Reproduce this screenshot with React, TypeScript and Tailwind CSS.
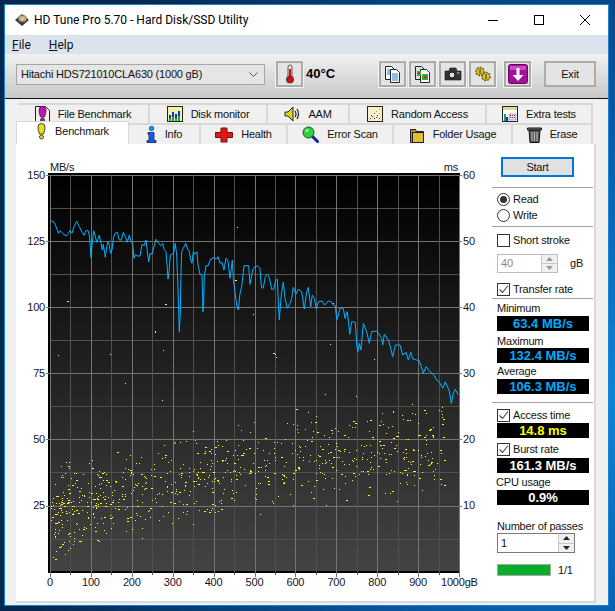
import React from 'react';

// trace of the transfer curve, read off the reference (page px)
const part1 = [[92,198],[100,199],[105,207],[112,225],[116,235],[120,227],[128,235],[138,243],[145,235],[150,227],[156,235],[162,215],[170,199],[178,215],[186,232],[192,241],[197,228],[204,226],[208,240],[210,265],[213,308],[216,270],[219,245],[221,227],[225,240],[230,262],[235,250],[238,240],[243,265],[247,285],[250,268],[254,295],[256,307],[260,275],[264,260],[268,270],[272,295],[276,285],[280,250],[285,235],[292,232],[298,255],[304,255],[310,232],[316,245],[322,262],[328,240],[334,262],[338,268],[342,310],[346,298],[352,303],[360,303],[366,268],[372,272],[378,255],[382,290],[386,320],[390,295],[396,298],[402,275],[408,253],[416,265],[422,272],[428,265],[432,283],[438,290],[442,340],[444,372],[447,350],[451,300],[455,297],[460,298],[466,265],[470,300],[473,375],[476,475],[478,530],[481,475],[483,350],[485,290],[490,280],[497,265],[503,282],[508,290],[512,315],[516,325],[520,290],[525,298],[531,290],[534,330],[540,358],[546,360],[549,470],[551,440],[553,365],[558,332],[564,332],[572,312],[580,308],[590,312],[594,305],[600,325],[606,322],[612,345],[618,310],[624,318],[630,370],[637,316],[640,370],[644,405],[650,450],[655,465],[660,415],[665,395],[672,332],[686,332],[690,388],[698,345],[704,335],[712,332]];
const part2 = [[30,340],[33,385],[36,400],[40,398],[46,365],[52,358],[58,368],[65,403],[71,403],[77,375],[82,373],[85,440],[88,495],[92,440],[95,410],[100,382],[105,430],[112,460],[120,445],[125,430],[130,397],[138,417],[145,403],[155,410],[163,462],[170,410],[175,397],[182,455],[187,420],[193,430],[199,462],[205,440],[217,438],[224,450],[235,438],[243,440],[250,450],[256,452],[260,495],[265,480],[270,460],[280,460],[285,490],[292,470],[297,515],[299,538],[305,500],[316,502],[320,570],[323,592],[328,565],[333,585],[340,505],[350,530],[358,565],[365,530],[380,528],[395,550],[398,570],[403,538],[415,555],[422,580],[428,605],[436,570],[450,570],[458,600],[468,592],[475,615],[482,592],[488,612],[508,617],[520,655],[528,635],[540,650],[550,658],[558,672],[570,685],[578,700],[586,680],[598,708],[604,745],[610,715],[616,703],[625,720]];
const curve = [
  ...part1.map(([x, y]) => [20 + x / 3, 155 + y / 3]),
  ...part2.map(([x, y]) => [250 + x / 3, 155 + y / 3]),
].map(([x, y]) => `${x.toFixed(1)},${y.toFixed(1)}`).join(' ');

const outliers = [[67,301],[58,355],[125,383],[155,332],[275,354],[165,455],[193,431],[163,350],[162,400],[20+142/3,155+439/3],[20+436/3,155+448/3],[20+406/3,155+529/3],[20+430/3,155+586/3],[20+271/3,155+598/3],[20+652/3,155+217/3],[20+646/3,155+376/3],[20+700/3,155+478/3],[250+10/3,155+478/3],[250+250/3,155+443/3],[250+241/3,155+568/3],[250+70/3,155+595/3],[250+79/3,155+607/3],[250+373/3,155+613/3],[250+226/3,155+718/3],[250+319/3,155+724/3],[250+139/3,155+763/3],[250+487/3,155+748/3],[250+577/3,155+757/3],[250+574/3,155+769/3]];

let seed = 20240611;
const rnd = () => {
  seed = (seed + 0x6d2b79f5) | 0;
  let t = Math.imul(seed ^ (seed >>> 15), 1 | seed);
  t = (t + Math.imul(t ^ (t >>> 7), 61 | t)) ^ t;
  return ((t ^ (t >>> 14)) >>> 0) / 4294967296;
};
const dots: number[][] = [...outliers];
for (let i = 0; i < 780; i++) {
  const x = 51 + 395 * Math.pow(rnd(), 1.3);
  const slope = x < 300 ? (x - 50) * 0.2 : 50 + (x - 300) * 0.06;
  const mid = 510 - slope + (x < 60 ? 14 : 0);
  const y = mid + (rnd() + rnd() - 1) * 50;
  dots.push([Math.round(x), Math.round(y)]);
}

const hLines = Array.from({ length: 12 }, (_, i) => 175 + i * 33.05);
const vLines = Array.from({ length: 21 }, (_, i) => 50 + i * 20.45);
const leftLabels = [['150', 175], ['125', 241], ['100', 307], ['75', 373], ['50', 439], ['25', 505]];
const rightLabels = [['60', 175], ['50', 241], ['40', 307], ['30', 373], ['20', 439], ['10', 505]];
const xLabels = [0, 100, 200, 300, 400, 500, 600, 700, 800, 900];

const Chart = () => (
  <svg viewBox="16 144 474 457" className="w-[474px] h-[457px] shrink-0">
    <defs>
      <linearGradient id="plot" x1="0" y1="0" x2="0" y2="1">
        <stop offset="0" stopColor="#000000" />
        <stop offset="1" stopColor="#434343" />
      </linearGradient>
    </defs>
    <rect x="48" y="173" width="412" height="400" fill="#000" />
    <rect x="50" y="175" width="409" height="396" fill="url(#plot)" />
    <g shapeRendering="crispEdges" strokeWidth="1">
      {hLines.map((y, i) => (
        <line key={y} x1={i % 2 ? 50 : 46} x2={i % 2 ? 459 : 462} y1={Math.round(y) + 0.5} y2={Math.round(y) + 0.5} stroke={i % 2 ? '#505050' : '#757575'} />
      ))}
      {vLines.map((x, i) => (
        <line key={x} x1={Math.round(x) + 0.5} x2={Math.round(x) + 0.5} y1="175" y2={i % 2 ? 575 : 577} stroke={i % 2 ? '#505050' : '#757575'} />
      ))}
    </g>
    <g fill="#ffff00" shapeRendering="crispEdges">
      {dots.map(([x, y], i) => <rect key={i} x={Math.round(x)} y={Math.round(y)} width={i % 5 === 0 ? 2 : 1} height="1" />)}
    </g>
    <polyline points={curve} fill="none" stroke="#00b4ff" strokeWidth="1" strokeLinejoin="round" />
    <g fontFamily="'Liberation Sans', Arial, sans-serif" fontSize="11" fill="#15151f">
      <text x="50" y="171">MB/s</text>
      <text x="458" y="171" textAnchor="end">ms</text>
      {leftLabels.map(([t, y]) => <text key={t} x="45" y={Number(y) + 4} textAnchor="end">{t}</text>)}
      {rightLabels.map(([t, y]) => <text key={t} x="463" y={Number(y) + 4}>{t}</text>)}
      {xLabels.map((t, i) => <text key={t} x={50 + i * 40.9} y="586" textAnchor="middle">{t}</text>)}
      <text x="441" y="586">1000gB</text>
    </g>
  </svg>
);

// toolbar + tab icons
const DiskIcon = () => (
  <svg viewBox="0 0 16 14" className="w-4 h-[14px]">
    <path d="M1 7 8 1l7 6-7 6z" fill="#3a3a3a" />
    <ellipse cx="8.5" cy="5.6" rx="4.2" ry="3.4" fill="#c8a878" stroke="#6b5a3a" strokeWidth=".5" />
    <circle cx="8.5" cy="5.6" r="1.1" fill="#f2e6cc" />
  </svg>
);
const Thermometer = () => (
  <svg viewBox="0 0 14 20" className="w-[14px] h-5">
    <rect x="5" y="1" width="4" height="13" rx="2" fill="#e8e8e8" stroke="#333" strokeWidth=".8" />
    <rect x="6" y="5" width="2" height="9" fill="#d01010" />
    <circle cx="7" cy="15.5" r="3.6" fill="#d01010" stroke="#333" strokeWidth=".8" />
  </svg>
);
const Doc = ({ x, y, fill }: { x: number; y: number; fill: string }) => (
  <path d={`M${x} ${y}h6l3 3v10h-9z`} fill={fill} stroke="#222" strokeWidth="1" />
);
const CopyText = () => (
  <svg viewBox="0 0 17 17" className="w-[17px] h-[17px]">
    <Doc x={1.5} y={.5} fill="#fff" />
    <Doc x={6.5} y={3.5} fill="#fff" />
    <path d="M8 8h6M8 10h6M8 12h6M8 14h6" stroke="#1e7be0" strokeWidth="1" />
    <path d="M3 4h3M3 6h3M3 8h3" stroke="#1e7be0" strokeWidth="1" />
  </svg>
);
const CopyImage = () => (
  <svg viewBox="0 0 17 17" className="w-[17px] h-[17px]">
    <Doc x={1.5} y={.5} fill="#ddd" />
    <Doc x={6.5} y={3.5} fill="#fff" />
    <rect x="3" y="5" width="4" height="5" fill="#1fb53a" />
    <rect x="4" y="6" width="2" height="2" fill="#e02020" />
    <rect x="8" y="8" width="6" height="6" fill="#1fb53a" />
    <rect x="10" y="10" width="2.5" height="2.5" fill="#e02020" />
  </svg>
);
const Camera = () => (
  <svg viewBox="0 0 18 14" className="w-[18px] h-[14px]">
    <path d="M1 4h4l1-3h6l1 3h4v9H1z" fill="#333" stroke="#111" strokeWidth=".6" />
    <circle cx="8" cy="8" r="3" fill="#ddd" stroke="#111" />
    <rect x="13" y="5" width="2.5" height="2" fill="#19c24a" />
  </svg>
);
const Gears = () => (
  <svg viewBox="0 0 18 16" className="w-[18px] h-4">
    <circle cx="6" cy="5.5" r="4" fill="#d8c820" stroke="#6a5f10" strokeWidth="1.6" strokeDasharray="2 1" />
    <circle cx="12" cy="10.5" r="4" fill="#d8c820" stroke="#6a5f10" strokeWidth="1.6" strokeDasharray="2 1" />
    <path d="M6 3v5M12 8v5" stroke="#444" strokeWidth="1.2" />
  </svg>
);
const SaveArrow = () => (
  <svg viewBox="0 0 20 20" className="w-5 h-5">
    <rect x=".5" y=".5" width="19" height="19" rx="2" fill="#a3109a" stroke="#5c0a58" />
    <rect x="2" y="2" width="16" height="4" fill="#c84cc0" />
    <path d="M8.500 4h3v7h4L10 17l-5.500-6h4z" fill="#fff" />
  </svg>
);
const Exclaim = ({ color, dark }: { color: string; dark: string }) => (
  <g>
    <path d="M2 4a3.500 3.500 0 0 1 7 0q0 3-1.500 7h-4Q2 7 2 4z" fill={color} stroke={dark} strokeWidth=".9" />
    <circle cx="5.500" cy="14" r="2" fill={color} stroke={dark} strokeWidth=".9" />
  </g>
);
const BenchIcon = () => (
  <svg viewBox="0 0 11 17" className="w-[11px] h-[17px]"><Exclaim color="#e8e010" dark="#333" /></svg>
);
const FileBenchIcon = () => (
  <svg viewBox="0 0 15 17" className="w-[15px] h-[17px]">
    <path d="M.5.5h10l4 4v12H.5z" fill="#f4f0e4" stroke="#222" />
    <g transform="translate(2 0)"><Exclaim color="#c010c0" dark="#333" /></g>
  </svg>
);
const MonitorIcon = () => (
  <svg viewBox="0 0 16 16" className="w-4 h-4">
    <rect x=".5" y=".5" width="15" height="15" fill="#f4f0a8" stroke="#222" />
    <path d="M2 15V9h2v6zM5 15V6h2v9zM8 15V8h2v7zM11 15V5h2v10z" fill="#1030d0" />
    <path d="M2 15v-3h2v3zM5 15v-4h2v4zM8 15v-3h2v3zM11 15v-5h2v5z" fill="#18b030" />
  </svg>
);
const SpeakerIcon = () => (
  <svg viewBox="0 0 16 16" className="w-4 h-4">
    <path d="M1 6h3l5-5v14l-5-5H1z" fill="#e8d020" stroke="#222" />
    <path d="M11 5q2 3 0 6M13 3q3 5 0 10" fill="none" stroke="#222" strokeWidth="1.200" />
  </svg>
);
const RandomIcon = () => (
  <svg viewBox="0 0 16 16" className="w-4 h-4">
    <rect x=".5" y=".5" width="15" height="15" fill="#f6f2c8" stroke="#222" />
    <path d="M3 12h1v1H3zM5 10h1v1H5zM9 11h1v1H9zM12 12h1v1h-1z" fill="#e02020" />
    <path d="M4 9h1v1H4zM7 7h1v1H7zM10 9h1v1h-1zM7 12h1v1H7z" fill="#2040e0" />
    <path d="M9 5h1v1H9zM12 3h1v1h-1zM12 7h1v1h-1z" fill="#c8a010" />
  </svg>
);
const ExtraIcon = () => (
  <svg viewBox="0 0 16 16" className="w-4 h-4">
    <rect x=".5" y=".5" width="15" height="15" fill="#fff" stroke="#222" />
    <rect x="1" y="1" width="14" height="3" fill="#e0d890" />
    <path d="M2 15V8h2v7z" fill="#10b030" /><path d="M4 15v-4h2v4z" fill="#1030d0" />
    <path d="M7 8h7v6H7z" fill="#dfe6f6" stroke="#5060c0" strokeWidth=".5" />
    <path d="M8 9h1v1H8zM10 9h1v1h-1zM12 9h1v1h-1zM8 11h1v1H8zM10 11h1v1h-1zM12 11h1v1h-1z" fill="#c02020" />
  </svg>
);
const InfoIcon = () => (
  <svg viewBox="0 0 11 17" className="w-[11px] h-[17px]">
    <circle cx="5.500" cy="2.500" r="2.200" fill="#18a0f0" stroke="#102060" strokeWidth=".7" />
    <path d="M2 6.500h6v8h2v2H1v-2h2v-6H2z" fill="#1060e0" stroke="#102060" strokeWidth=".8" />
  </svg>
);
const HealthIcon = () => (
  <svg viewBox="0 0 18 16" className="w-[18px] h-4">
    <path d="M6 1h6v4.500h5.500v5H12V15H6v-4.500H.5v-5H6z" fill="#e01818" stroke="#701010" />
  </svg>
);
const ScanIcon = () => (
  <svg viewBox="0 0 17 17" className="w-[17px] h-[17px]">
    <path d="M10 10l5.500 5.500" stroke="#1020a0" strokeWidth="3" strokeLinecap="round" />
    <circle cx="6.500" cy="6.500" r="5.500" fill="#30d040" stroke="#185020" />
    <circle cx="5" cy="4.500" r="1.500" fill="#b0f0b0" />
  </svg>
);
const FolderIcon = () => (
  <svg viewBox="0 0 16 16" className="w-4 h-4">
    <path d="M1.500 2.500h5l1 2h7v11h-13z" fill="#b09010" stroke="#222" />
    <rect x="3.500" y="5.500" width="11" height="10" fill="#e0c030" stroke="#222" />
  </svg>
);
const TrashIcon = () => (
  <svg viewBox="0 0 15 17" className="w-[15px] h-[17px]">
    <path d="M2 4h11l-1 12.500H3z" fill="#5a5a5a" stroke="#111" />
    <path d="M5 6v9M7.500 6v9M10 6v9" stroke="#bbb" />
    <path d="M.5 2h14v2H.5z" fill="#777" stroke="#111" />
  </svg>
);
const Check = () => (
  <svg viewBox="0 0 11 11" className="w-[11px] h-[11px]">
    <path d="M1.500 5.500l3 3 5.500-7" fill="none" stroke="#444" strokeWidth="1.100" />
  </svg>
);
const ArrowPair = ({ dark }: { dark?: boolean }) => (
  <span className="flex flex-col w-4 h-full border-l border-[#c8c8c8] bg-[#f0f0f0]">
    <span className="flex-1 flex items-center justify-center border-b border-[#c8c8c8]">
      <svg viewBox="0 0 7 4" className="w-[7px] h-1"><path d="M3.500 0 7 4H0z" fill={dark ? '#222' : '#999'} /></svg>
    </span>
    <span className="flex-1 flex items-center justify-center">
      <svg viewBox="0 0 7 4" className="w-[7px] h-1"><path d="M0 0h7L3.500 4z" fill={dark ? '#222' : '#999'} /></svg>
    </span>
  </span>
);

const ToolBtn = ({ children, className }: { children: React.ReactNode; className?: string }) => (
  <div className={`w-[27px] h-[26px] flex items-center justify-center border-2 border-[#ababab] bg-[#e4e4e4] outline outline-1 outline-[#f4f4f4] ${className ?? ''}`}>
    {children}
  </div>
);

const Tab = ({ icon, label, className, active }: { icon: React.ReactNode; label: string; className: string; active?: boolean }) => (
  <div className={`flex items-center justify-center gap-2 border-[#d8d8d8] ${active ? 'bg-white border-t border-x' : 'bg-[#f0f0f0] border-t-2 border-r-2'} ${className}`}>
    {icon}
    <span>{label}</span>
  </div>
);

const Sep = ({ className }: { className: string }) => <div className={`h-px w-[101px] ml-[2px] bg-[#a0a0a0] ${className}`} />;

const CheckRow = ({ label, on, className }: { label: string; on?: boolean; className: string }) => (
  <div className={`flex items-center gap-[3px] h-4 ml-[7px] ${className}`}>
    <span className="w-[13px] h-[13px] border border-[#333] bg-white flex items-center justify-center">{on && <Check />}</span>
    <span>{label}</span>
  </div>
);

const Radio = ({ label, on }: { label: string; on?: boolean }) => (
  <div className="flex items-center gap-[3px] h-4 ml-[7px]">
    <span className="w-[13px] h-[13px] rounded-full border border-[#333] bg-white flex items-center justify-center">
      {on && <span className="w-[7px] h-[7px] rounded-full bg-[#333]" />}
    </span>
    <span>{label}</span>
  </div>
);

const Value = ({ text, className }: { text: string; className: string }) => (
  <div className={`w-[92px] ml-[7px] h-[15px] bg-black flex items-center justify-center text-[13px] tracking-normal font-bold leading-none ${className}`}>{text}</div>
);

export default function App() {
  return (
    <div className="w-[615px] h-[611px] overflow-hidden pl-1 pt-1 bg-[radial-gradient(circle_at_100%_65%,#0b84dc_0,#0a5fae_32%,#06284f_85%)] font-['Liberation_Sans',Arial,sans-serif] text-[11px] tracking-[-0.2px] text-[#111]">
      <div className="w-[605px] h-[602px] border border-[#1683d8] bg-[#f0f0f0] flex flex-col">
        {/* title bar */}
        <div className="h-[30px] shrink-0 bg-white flex items-center pl-[9px]">
          <DiskIcon />
          <span className="ml-[4px] font-['Roboto',sans-serif] text-xs tracking-normal text-black">HD Tune Pro 5.70 - Hard Disk/SSD Utility</span>
          <div className="ml-auto flex h-full">
            <div className="w-[46px] flex items-center justify-center"><span className="w-[10px] h-px bg-black" /></div>
            <div className="w-[46px] flex items-center justify-center"><span className="w-[10px] h-[10px] border border-black" /></div>
            <div className="w-[46px] flex items-center justify-center">
              <svg viewBox="0 0 10 10" className="w-[10px] h-[10px]"><path d="M0 0l10 10M10 0 0 10" stroke="#000" /></svg>
            </div>
          </div>
        </div>
        {/* menu */}
        <div className="h-[19px] shrink-0 bg-[#dce3ec] flex items-center pl-[7px] gap-[18px] font-['Roboto',sans-serif] text-xs tracking-normal">
          <span><u>F</u>ile</span>
          <span><u>H</u>elp</span>
        </div>
        {/* toolbar */}
        <div className="h-[45px] shrink-0 bg-gradient-to-b from-[#f1f1f1] to-[#c8c8c8] border-b border-[#111] flex items-center pl-[11px] pb-1">
          <div className="w-[249px] h-[21px] border border-[#a6a6a6] bg-[#e5e5e5] flex items-center pl-1 pr-[6px] justify-between">
            <span>Hitachi HDS721010CLA630 (1000 gB)</span>
            <svg viewBox="0 0 9 5" className="w-[9px] h-[5px]"><path d="M.5.5 4.500 4.500 8.500.5" fill="none" stroke="#555" /></svg>
          </div>
          <ToolBtn className="ml-[11px]"><Thermometer /></ToolBtn>
          <span className="ml-[3px] w-[31px] text-[13px] tracking-normal font-bold text-black">40°C</span>
          <ToolBtn className="ml-[42px]"><CopyText /></ToolBtn>
          <ToolBtn className="ml-[3px]"><CopyImage /></ToolBtn>
          <ToolBtn className="ml-[3px]"><Camera /></ToolBtn>
          <ToolBtn className="ml-[3px]"><Gears /></ToolBtn>
          <ToolBtn className="ml-[8px]"><SaveArrow /></ToolBtn>
          <div className="ml-[13px] w-[52px] h-[26px] flex items-center justify-center border-2 border-[#ababab] bg-[#e4e4e4]">Exit</div>
        </div>
        {/* tabs */}
        <div className="flex-1 flex flex-col pl-[11px] pr-3 pt-1 pb-[2px]">
          <div className="flex ml-[2px] h-5 shrink-0">
            <Tab className="w-[132px]" icon={<FileBenchIcon />} label="File Benchmark" />
            <Tab className="w-[118px]" icon={<MonitorIcon />} label="Disk monitor" />
            <Tab className="w-[82px]" icon={<SpeakerIcon />} label="AAM" />
            <Tab className="w-[137px]" icon={<RandomIcon />} label="Random Access" />
            <Tab className="w-[106px]" icon={<ExtraIcon />} label="Extra tests" />
          </div>
          <div className="flex items-end h-[23px] shrink-0 -mt-[2px] relative z-10">
            <Tab active className="w-[113px] h-[23px] pb-[3px]" icon={<BenchIcon />} label="Benchmark" />
            <Tab className="w-[72px] h-[21px]" icon={<InfoIcon />} label="Info" />
            <Tab className="w-[87px] h-[21px]" icon={<HealthIcon />} label="Health" />
            <Tab className="w-[106px] h-[21px]" icon={<ScanIcon />} label="Error Scan" />
            <Tab className="w-[119px] h-[21px]" icon={<FolderIcon />} label="Folder Usage" />
            <Tab className="w-[80px] h-[21px]" icon={<TrashIcon />} label="Erase" />
          </div>
          {/* panel */}
          <div className="w-[580px] h-[459px] bg-white border-r-2 border-b-2 border-[#dadada] flex">
            <Chart />
            <div className="w-[104px] shrink-0 flex flex-col">
              <div className="mt-[13px] ml-[11px] w-[73px] h-5 border-2 border-[#0078d7] bg-[#e1e1e1] flex items-center justify-center">Start</div>
              <Sep className="mt-[10px]" />
              <div className="mt-[3px]"><Radio on label="Read" /><Radio label="Write" /></div>
              <Sep className="mt-[3px]" />
              <CheckRow className="mt-[5px]" label="Short stroke" />
              <div className="mt-[6px] flex items-center ml-[7px]">
                <div className="w-[61px] h-[19px] border border-[#bdbdbd] bg-white flex items-stretch justify-between text-[#888] overflow-hidden">
                  <span className="pl-[3px] self-center">40</span>
                  <ArrowPair />
                </div>
                <span className="ml-[12px]">gB</span>
              </div>
              <CheckRow on className="mt-2" label="Transfer rate" />
              <Sep className="mt-[1px]" />
              <div className="mt-[2px] ml-[7px] h-[14px] leading-[14px]">Minimum</div>
              <Value className="mt-px text-[#00aaff]" text="63.4 MB/s" />
              <div className="mt-[3px] ml-[7px] h-[14px] leading-[14px]">Maximum</div>
              <Value className="text-[#00aaff]" text="132.4 MB/s" />
              <div className="mt-px ml-[7px] h-[14px] leading-[14px]">Average</div>
              <Value className="mt-px text-[#00aaff]" text="106.3 MB/s" />
              <Sep className="mt-2" />
              <CheckRow on className="mt-1" label="Access time" />
              <Value className="text-[#ffff00]" text="14.8 ms" />
              <CheckRow on className="mt-[3px]" label="Burst rate" />
              <Value className="mt-px text-white" text="161.3 MB/s" />
              <div className="mt-[2px] ml-[6px] h-[14px] leading-[14px]">CPU usage</div>
              <Value className="mt-px text-white" text="0.9%" />
              <div className="mt-[14px] ml-[7px] h-[14px] leading-[14px] whitespace-nowrap">Number of passes</div>
              <div className="ml-[7px] w-[78px] h-5 border border-[#7a7a7a] bg-white flex justify-between items-stretch overflow-hidden">
                <span className="pl-[3px] self-center">1</span>
                <ArrowPair dark />
              </div>
              <div className="mt-[9px] ml-[7px] flex items-center">
                <div className="w-[54px] h-3 border border-[#a8a8a8] bg-[#0aad2a]" />
                <span className="ml-[7px]">1/1</span>
              </div>
            </div>
          </div>
        </div>
      </div>
    </div>
  );
}
